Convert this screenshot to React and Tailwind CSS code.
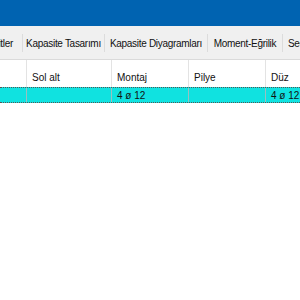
import React from 'react';

const tabs = [
  { label: 'Kesitler', w: 'w-[23px]', align: 'justify-end pr-[9px]' },
  { label: 'Kapasite Tasarımı', w: 'w-[82px]', align: 'justify-center' },
  { label: 'Kapasite Diyagramları', w: 'w-[103px]', align: 'justify-center' },
  { label: 'Moment-Eğrilik', w: 'w-[75px]', align: 'justify-center' },
  { label: 'Seçenekler', w: 'w-[80px]', align: 'justify-start pl-[5px]' },
];

const columns = [
  { label: '', w: 'w-[27px]', value: '' },
  { label: 'Sol alt', w: 'w-[85px]', value: '' },
  { label: 'Montaj', w: 'w-[77px]', value: '4 ø 12' },
  { label: 'Pilye', w: 'w-[77px]', value: '' },
  { label: 'Düz', w: 'w-[80px]', value: '4 ø 12' },
];

const App = () => {
  return (
    <div className="w-[300px] h-[300px] overflow-hidden bg-white text-[10px] text-[#111] font-['Liberation_Sans',Arial,sans-serif]">
      {/* Title bar */}
      <div className="h-[26px] bg-[#0063b1]" />

      {/* Tabs */}
      <div className="h-[34px] bg-[#f0f0f0] border-b border-[#dadada] pt-[8px] flex overflow-hidden">
        {tabs.map((tab, i) => (
          <div
            key={i}
            className={`${tab.w} ${tab.align} shrink-0 h-[18px] flex items-center whitespace-nowrap overflow-hidden border-r border-[#dcdcdc] tracking-[-0.3px]`}
          >
            {tab.label}
          </div>
        ))}
      </div>

      {/* Table */}
      <div className="flex flex-col">
        <div className="flex h-[27px]">
          {columns.map((col, i) => (
            <div
              key={i}
              className={`${col.w} shrink-0 border-r border-[#e3e3e3] pl-[5px] pt-[10px] whitespace-nowrap overflow-hidden`}
            >
              {col.label}
            </div>
          ))}
        </div>
        <div className="flex h-[16px] bg-[#10e2e0] border-y border-dotted border-[#555]">
          {columns.map((col, i) => (
            <div
              key={i}
              className={`${col.w} shrink-0 border-r border-[#9bbfbf] pl-[5px] flex items-center whitespace-nowrap overflow-hidden`}
            >
              {col.value}
            </div>
          ))}
        </div>
      </div>
    </div>
  );
};

export default App;
